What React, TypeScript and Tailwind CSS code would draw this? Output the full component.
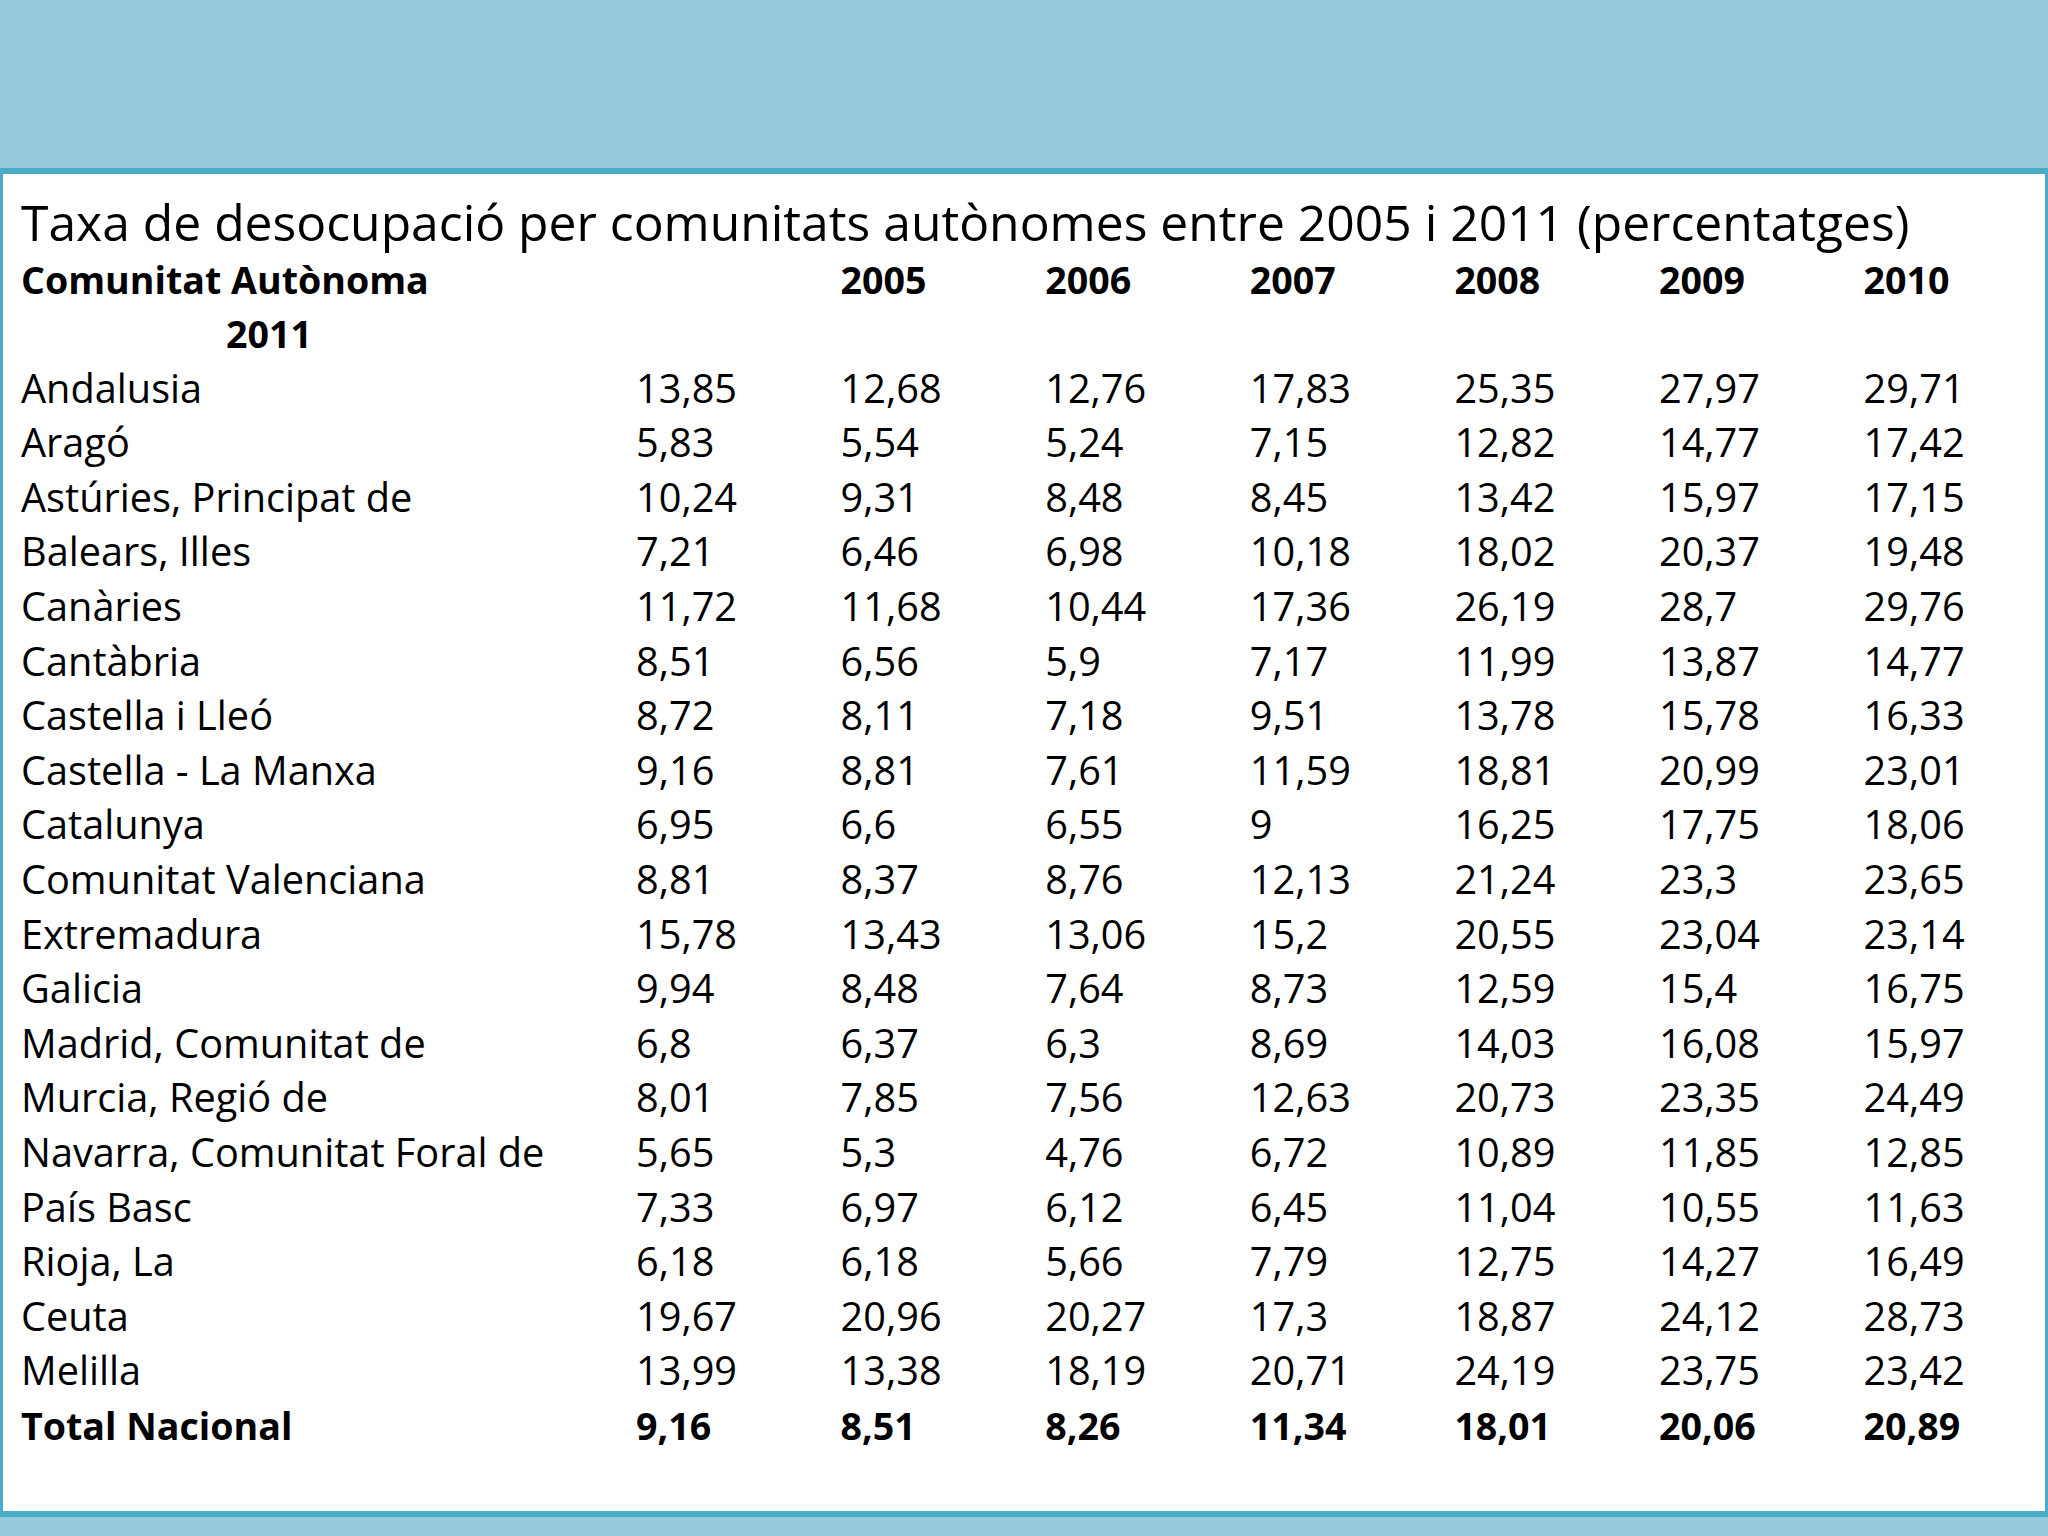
import React from 'react';

const rows: [string, string[]][] = [
  ['Andalusia', ['13,85', '12,68', '12,76', '17,83', '25,35', '27,97', '29,71']],
  ['Aragó', ['5,83', '5,54', '5,24', '7,15', '12,82', '14,77', '17,42']],
  ['Astúries, Principat de', ['10,24', '9,31', '8,48', '8,45', '13,42', '15,97', '17,15']],
  ['Balears, Illes', ['7,21', '6,46', '6,98', '10,18', '18,02', '20,37', '19,48']],
  ['Canàries', ['11,72', '11,68', '10,44', '17,36', '26,19', '28,7', '29,76']],
  ['Cantàbria', ['8,51', '6,56', '5,9', '7,17', '11,99', '13,87', '14,77']],
  ['Castella i Lleó', ['8,72', '8,11', '7,18', '9,51', '13,78', '15,78', '16,33']],
  ['Castella - La Manxa', ['9,16', '8,81', '7,61', '11,59', '18,81', '20,99', '23,01']],
  ['Catalunya', ['6,95', '6,6', '6,55', '9', '16,25', '17,75', '18,06']],
  ['Comunitat Valenciana', ['8,81', '8,37', '8,76', '12,13', '21,24', '23,3', '23,65']],
  ['Extremadura', ['15,78', '13,43', '13,06', '15,2', '20,55', '23,04', '23,14']],
  ['Galicia', ['9,94', '8,48', '7,64', '8,73', '12,59', '15,4', '16,75']],
  ['Madrid, Comunitat de', ['6,8', '6,37', '6,3', '8,69', '14,03', '16,08', '15,97']],
  ['Murcia, Regió de', ['8,01', '7,85', '7,56', '12,63', '20,73', '23,35', '24,49']],
  ['Navarra, Comunitat Foral de', ['5,65', '5,3', '4,76', '6,72', '10,89', '11,85', '12,85']],
  ['País Basc', ['7,33', '6,97', '6,12', '6,45', '11,04', '10,55', '11,63']],
  ['Rioja, La', ['6,18', '6,18', '5,66', '7,79', '12,75', '14,27', '16,49']],
  ['Ceuta', ['19,67', '20,96', '20,27', '17,3', '18,87', '24,12', '28,73']],
  ['Melilla', ['13,99', '13,38', '18,19', '20,71', '24,19', '23,75', '23,42']],
];

const total = ['9,16', '8,51', '8,26', '11,34', '18,01', '20,06', '20,89'];
const years = ['', '2005', '2006', '2007', '2008', '2009', '2010'];

const gridCls = 'grid grid-cols-[615px_repeat(7,204.6px)] h-[54.6px] items-center';

export default function App() {
  return (
    <div
      className="w-[2048px] h-[1536px] bg-[#96c9dc] pt-[168px] pb-[19px] flex flex-col text-black"
      style={{ fontFamily: '"Open Sans", Lato, sans-serif' }}
    >
      <div className="flex-1 bg-white border-[#4bacc6] border-y-[6px] border-x-[3px] pl-[18px] pt-[18px]">
        <h1 className="text-[49.8px] leading-[60px] font-normal">
          Taxa de desocupació per comunitats autònomes entre 2005 i 2011 (percentatges)
        </h1>

        <div className="text-[39.7px] leading-none">
          {/* Header row, wraps onto a second line */}
          <div className={`${gridCls} font-bold text-[37.6px]`}>
            <div>Comunitat Autònoma</div>
            {years.map((y, i) => (
              <div key={i}>{y}</div>
            ))}
          </div>
          <div className={`${gridCls} font-bold text-[37.6px]`}>
            <div className="pl-[205px]">2011</div>
          </div>

          {rows.map(([name, vals]) => (
            <div key={name} className={gridCls}>
              <div>{name}</div>
              {vals.map((v, i) => (
                <div key={i}>{v}</div>
              ))}
            </div>
          ))}

          <div className={`${gridCls} font-bold text-[37.6px]`}>
            <div>Total Nacional</div>
            {total.map((v, i) => (
              <div key={i}>{v}</div>
            ))}
          </div>
        </div>
      </div>
    </div>
  );
}
